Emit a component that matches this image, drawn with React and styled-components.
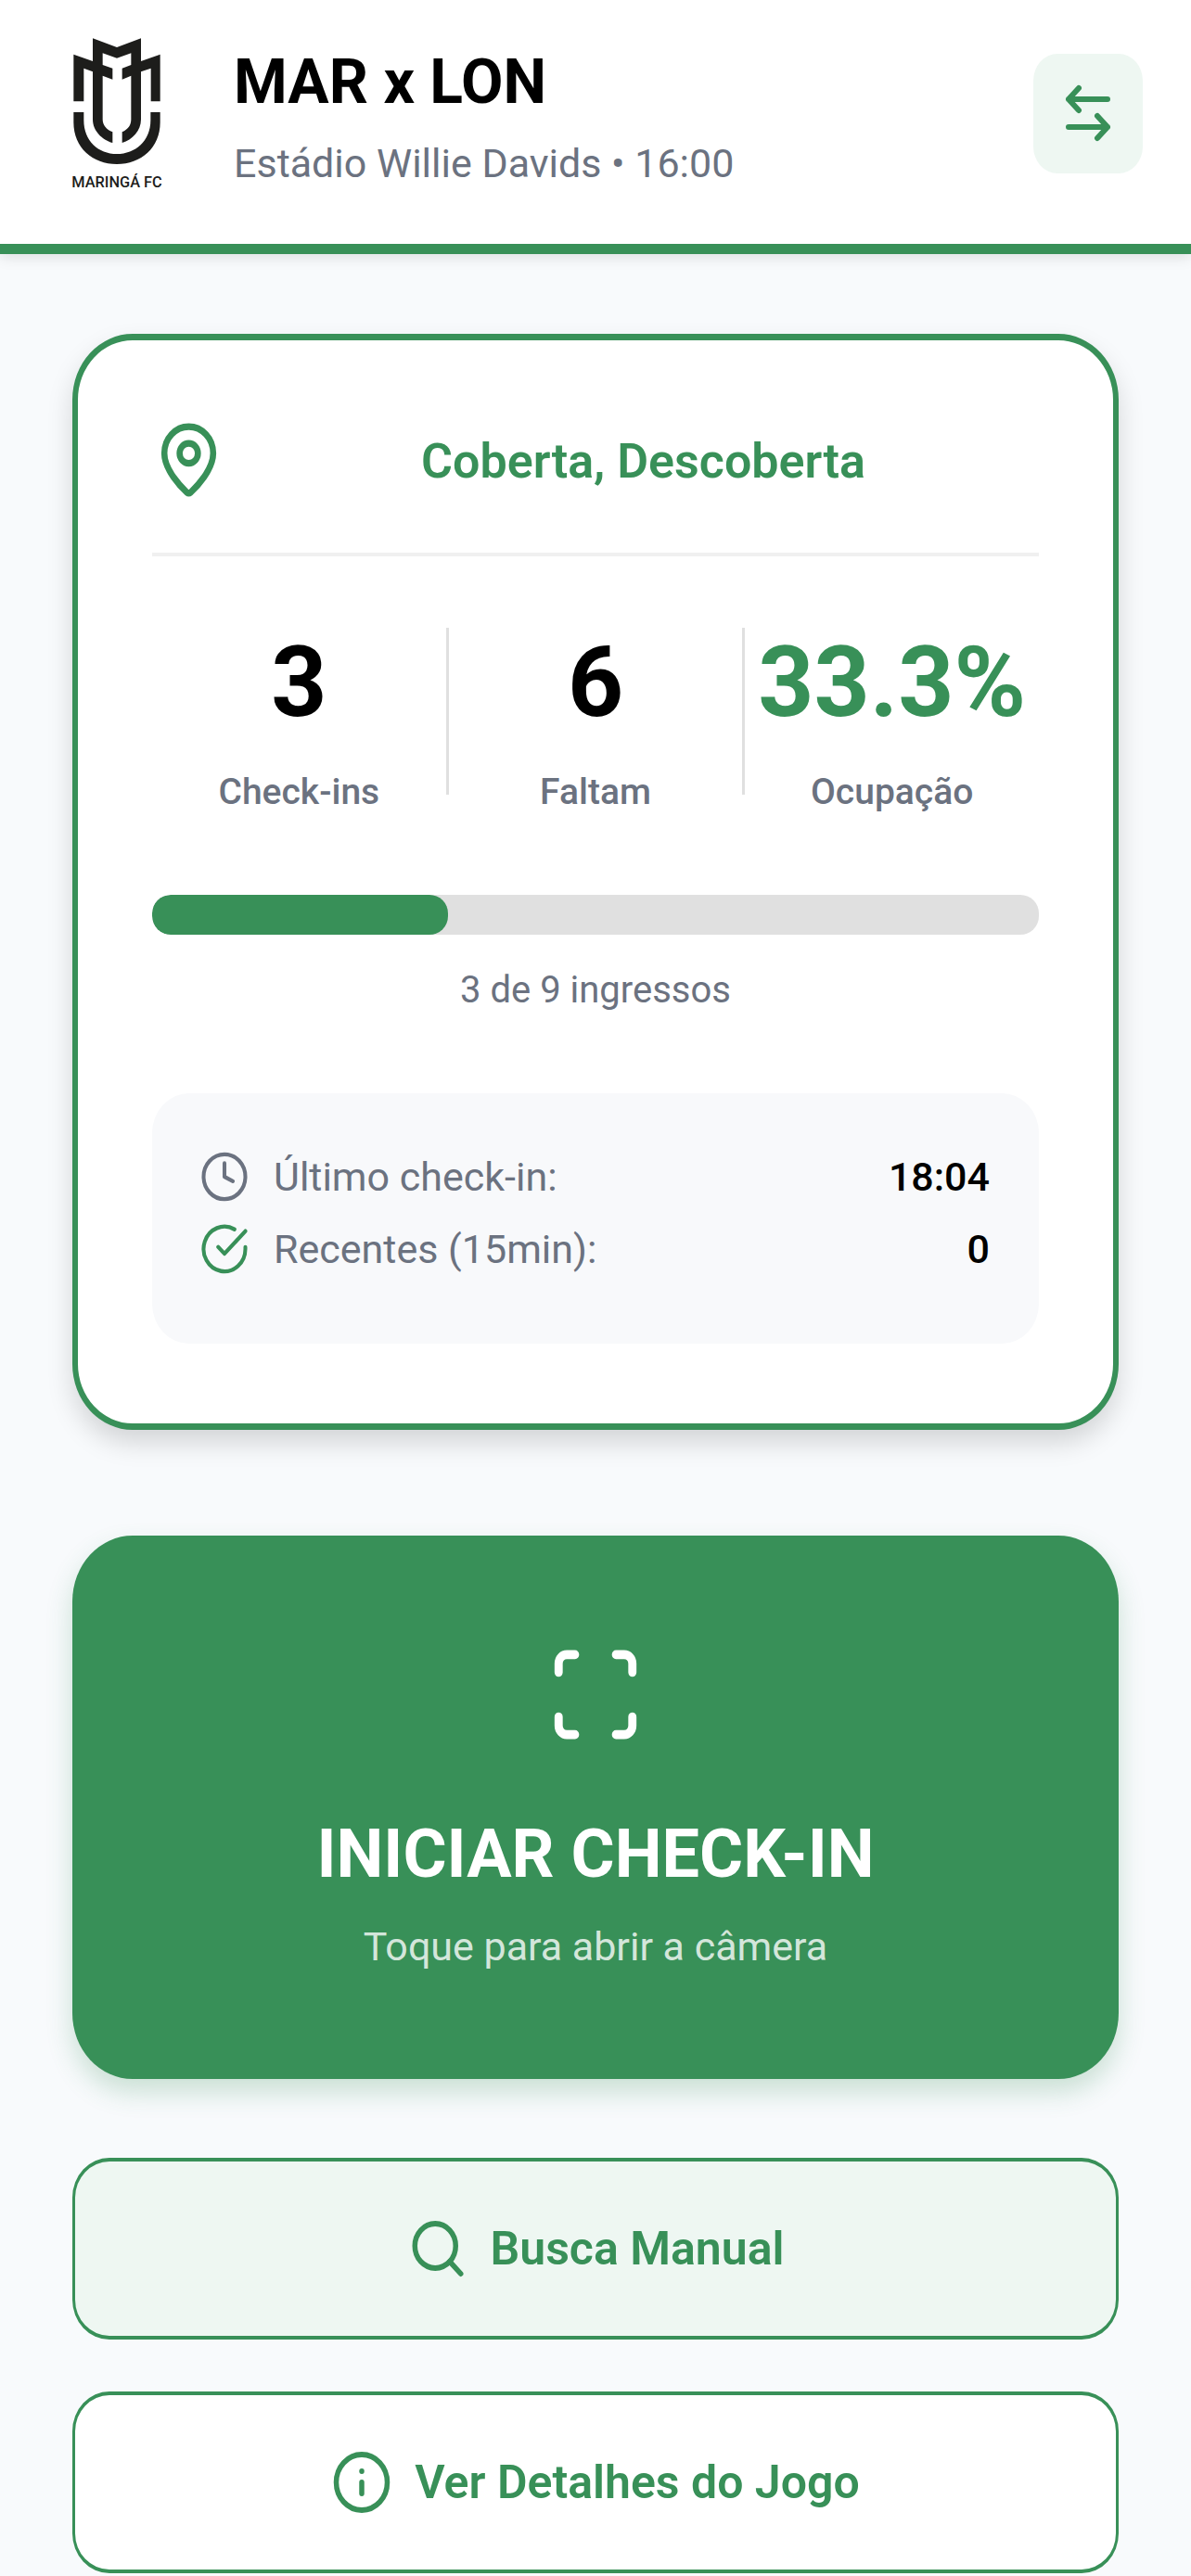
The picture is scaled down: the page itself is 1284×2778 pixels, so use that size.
import React from "react";
import styled, { createGlobalStyle } from "styled-components";
import { MapPin, Clock, Scan, Search, Info } from "lucide-react";

const green = "#389058";
const mint = "#eef7f2";
const gray = "#6b7280";
const canvas = "#f8fafc";

const GlobalStyle = createGlobalStyle`
  *, *::before, *::after { box-sizing: border-box; }
  body {
    margin: 0;
    background: ${canvas};
    color: #000;
    font-family: Roboto, "Noto Sans", sans-serif;
  }
  h1, h2, p, dl, dt, dd { margin: 0; }
  button { font: inherit; cursor: pointer; }
  svg { display: block; flex: none; }
`;

const Page = styled.div`
  min-height: 100vh;
  display: flex;
  flex-direction: column;
`;

const TopBar = styled.header`
  display: flex;
  align-items: center;
  gap: 53px;
  padding: 33px 52px 52px;
  background: #fff;
  border-bottom: 11px solid ${green};
  box-shadow: 0 4px 14px rgba(0, 0, 0, 0.1);
`;

const CrestBox = styled.div`
  flex: none;
  width: 147px;
  display: flex;
  justify-content: center;
`;

const Match = styled.div`
  flex: 1;
  min-width: 0;
  display: flex;
  flex-direction: column;
  gap: 12px;
`;

const MatchTitle = styled.h1`
  font-size: 66px;
  line-height: 96px;
  font-weight: 700;
`;

const MatchPlace = styled.p`
  font-size: 43px;
  line-height: 54px;
  color: ${gray};
`;

const SwapButton = styled.button`
  flex: none;
  width: 118px;
  height: 129px;
  display: grid;
  place-items: center;
  padding: 0;
  border: 0;
  border-radius: 26px / 29px;
  background: ${mint};
  color: ${green};
`;

const Content = styled.main`
  display: flex;
  flex-direction: column;
  padding: 86px 78px 0;
`;

const Card = styled.section`
  padding: 86px 80px;
  background: #fff;
  border: solid ${green};
  border-width: 7px 6px;
  border-radius: 65px / 71px;
  box-shadow: 0 14px 28px rgba(0, 0, 0, 0.15);
`;

const CardHead = styled.div`
  display: flex;
  align-items: center;
  gap: 24px;
  padding-bottom: 57px;
  border-bottom: 4px solid #f0f0f0;
  color: ${green};
`;

const Sectors = styled.h2`
  flex: 1;
  padding-top: 4px;
  text-align: center;
  font-size: 52px;
  line-height: 72px;
  font-weight: 600;
`;

const Stats = styled.div`
  display: flex;
  padding: 77px 0 84px;
`;

const Stat = styled.div`
  flex: 1 1 0;
  min-width: 0;
  display: flex;
  flex-direction: column;
  align-items: center;
  gap: 30px;
`;

const StatValue = styled.strong`
  font-size: 105px;
  line-height: 120px;
  font-weight: 700;
  color: ${(p) => (p.$accent ? green : "#000")};
`;

const StatLabel = styled.span`
  font-size: 39px;
  line-height: 54px;
  font-weight: 500;
  color: ${gray};
`;

const StatDivider = styled.div`
  width: 3px;
  height: 180px;
  background: #e0e0e0;
`;

const Track = styled.div`
  height: 43px;
  border-radius: 20px;
  background: #e0e0e0;
  overflow: hidden;
`;

const Fill = styled.div`
  height: 100%;
  border-radius: 20px;
  background: ${green};
`;

const TrackCaption = styled.p`
  margin: 32px 0 83px;
  text-align: center;
  font-size: 40px;
  line-height: 56px;
  color: ${gray};
`;

const Activity = styled.dl`
  padding: 61px 53px 53px 51px;
  border-radius: 40px / 43px;
  background: #f8f9fb;
`;

const ActivityRow = styled.div`
  display: flex;
  align-items: center;
  gap: 26px;
  height: 58px;
  margin-bottom: 20px;
  font-size: 43px;
  line-height: 58px;
  color: ${(p) => p.$tone || gray};
`;

const ActivityLabel = styled.dt`
  flex: 1;
  color: ${gray};
`;

const ActivityValue = styled.dd`
  font-weight: 500;
  color: #000;
`;

const StartButton = styled.button`
  display: flex;
  flex-direction: column;
  align-items: center;
  margin-top: 114px;
  padding: 114px 40px;
  border: 0;
  border-radius: 65px / 71px;
  background: ${green};
  color: #fff;
  box-shadow: 0 14px 28px rgba(56, 144, 88, 0.24);
`;

const StartTitle = styled.span`
  margin-top: 65px;
  font-size: 72px;
  line-height: 100px;
  font-weight: 700;
`;

const StartHint = styled.span`
  margin-top: 20px;
  font-size: 43px;
  line-height: 58px;
  color: rgba(255, 255, 255, 0.8);
`;

const Actions = styled.div`
  display: flex;
  flex-direction: column;
  gap: 56px;
  margin-top: 85px;
`;

const ActionButton = styled.button`
  display: flex;
  align-items: center;
  justify-content: center;
  gap: 24px;
  min-height: 196px;
  padding: 40px;
  border: solid ${green};
  border-width: 4px 3px;
  border-radius: 40px / 43px;
  background: ${(p) => (p.$tinted ? mint : "#fff")};
  color: ${green};
  font-size: 50px;
  line-height: 72px;
  font-weight: 600;
`;

function Crest() {
  return (
    <svg width="104" height="178" viewBox="42 38 312 534" role="img" aria-label="Maringá FC">
      <path
        fill="#1d1d1b"
        d="M58 115 L120 137 V63 L198 92 L276 63 V137 L338 115 V267 H308 V160 L276 171 V325 C276 362 248 391 215 401 V366 C235 357 244 343 244 325 V184 L215 196 V160 L244 149 V111 L198 127 L152 111 V149 L184 160 V196 L152 184 V325 C152 343 164 358 184 366 V401 C150 391 120 362 120 325 V171 L91 160 V267 H58 Z"
      />
      <path
        fill="#1d1d1b"
        d="M58 302 H91 V328 C91 394 138 437 198 437 C258 437 307 394 307 328 V302 H338 V335 C338 417 276 470 198 470 C120 470 58 417 58 335 Z"
      />
      <text x="198" y="546" textAnchor="middle" fill="#1d1d1b" fontFamily="Roboto, sans-serif" fontWeight="500" fontSize="49">
        MARINGÁ FC
      </text>
    </svg>
  );
}

function SwapIcon() {
  return (
    <svg
      width="50"
      height="62"
      viewBox="0 0 50 62"
      fill="none"
      stroke="currentColor"
      strokeWidth="6"
      strokeLinecap="round"
      strokeLinejoin="round"
      aria-hidden="true"
    >
      <path d="M46 16 H4 M15 4 L4 16 L15 28" />
      <path d="M4 46 H46 M35 34 L46 46 L35 58" />
    </svg>
  );
}

function CheckRing() {
  return (
    <svg
      width="54"
      height="58"
      viewBox="0 0 24 24"
      preserveAspectRatio="none"
      fill="none"
      stroke="currentColor"
      strokeWidth="1.8"
      strokeLinecap="round"
      strokeLinejoin="round"
      aria-hidden="true"
    >
      <path d="M22 11.1V12a10 10 0 1 1-5.2-8.8" />
      <path d="M22 4 12 14.1l-3-3" />
    </svg>
  );
}

const stats = [
  { value: "3", label: "Check-ins" },
  { value: "6", label: "Faltam" },
  { value: "33.3%", label: "Ocupação", accent: true },
];

const checked = 3;
const total = 9;

export default function App() {
  return (
    <Page>
      <GlobalStyle />
      <TopBar>
        <CrestBox>
          <Crest />
        </CrestBox>
        <Match>
          <MatchTitle>MAR x LON</MatchTitle>
          <MatchPlace>Estádio Willie Davids • 16:00</MatchPlace>
        </Match>
        <SwapButton type="button" aria-label="Trocar jogo">
          <SwapIcon />
        </SwapButton>
      </TopBar>

      <Content>
        <Card>
          <CardHead>
            <MapPin width={79} height={86} preserveAspectRatio="none" />
            <Sectors>Coberta, Descoberta</Sectors>
          </CardHead>

          <Stats>
            {stats.map((s, i) => (
              <React.Fragment key={s.label}>
                {i > 0 && <StatDivider />}
                <Stat>
                  <StatValue $accent={s.accent}>{s.value}</StatValue>
                  <StatLabel>{s.label}</StatLabel>
                </Stat>
              </React.Fragment>
            ))}
          </Stats>

          <Track role="progressbar" aria-label="Ocupação" aria-valuemin={0} aria-valuemax={total} aria-valuenow={checked}>
            <Fill style={{ width: `${(checked / total) * 100}%` }} />
          </Track>
          <TrackCaption>
            {checked} de {total} ingressos
          </TrackCaption>

          <Activity>
            <ActivityRow>
              <Clock width={54} height={58} preserveAspectRatio="none" strokeWidth={1.8} />
              <ActivityLabel>Último check-in:</ActivityLabel>
              <ActivityValue>18:04</ActivityValue>
            </ActivityRow>
            <ActivityRow $tone={green}>
              <CheckRing />
              <ActivityLabel>Recentes (15min):</ActivityLabel>
              <ActivityValue>0</ActivityValue>
            </ActivityRow>
          </Activity>
        </Card>

        <StartButton type="button">
          <Scan width={106} height={115} preserveAspectRatio="none" />
          <StartTitle>INICIAR CHECK-IN</StartTitle>
          <StartHint>Toque para abrir a câmera</StartHint>
        </StartButton>

        <Actions>
          <ActionButton type="button" $tinted>
            <Search width={66} height={72} preserveAspectRatio="none" />
            Busca Manual
          </ActionButton>
          <ActionButton type="button">
            <Info width={66} height={72} preserveAspectRatio="none" />
            Ver Detalhes do Jogo
          </ActionButton>
        </Actions>
      </Content>
    </Page>
  );
}
